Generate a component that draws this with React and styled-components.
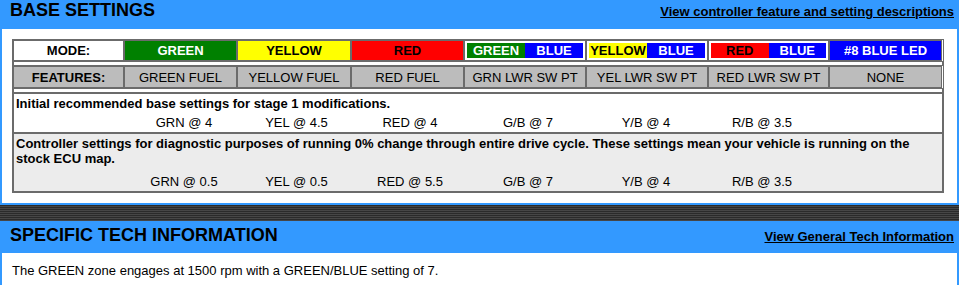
import React from 'react';
import styled, { createGlobalStyle } from 'styled-components';

const colors = {
  blue: '#3399ff',
  line: '#6b6b6b',
  feature: '#bcbcbc',
  noteAlt: '#ececec',
  green: '#008000',
  yellow: '#ffff00',
  red: '#ff0000',
  ledBlue: '#0000ff',
  white: '#ffffff',
  black: '#000000',
}

const columns = '111px 113px 114px 113px 122px 122px 121px 113px'
// the setting values sit in their own inner grid, a little off the header columns
const valueColumns = '113px 114px 111px 116px 120px 116px 116px'

const GlobalStyle = createGlobalStyle`
  body{
    margin:0;
    background-color:${colors.white};
    font-family:"Liberation Sans", Arial, sans-serif;
    color:${colors.black};
  }
`

const Page = styled.div`
  width:959px;
`

const Section = styled.div`
  background-color:${colors.blue};
  padding:0 2px 2px 2px;
`

const Header = styled.div`
  display:flex;
  justify-content:space-between;
  align-items:baseline;
  height:${props => props.trimmed ? 29 : 32}px;
  box-sizing:border-box;
  padding:${props => props.trimmed ? 0 : 4}px 3px 0 8px;

  h2{
    margin:0;
    font-size:18px;
    line-height:21px;
    font-weight:bold;
  }
`

const HeaderLink = styled.a`
  font-size:13px;
  line-height:15px;
  font-weight:bold;
  color:${colors.black};
  text-decoration:underline;
  cursor:pointer;
`

const Panel = styled.div`
  background-color:${colors.white};
  padding:10px 10px;
  font-size:13px;
  line-height:15px;
`

const Stripes = styled.div`
  height:16px;
  background:repeating-linear-gradient(#2a2a2a 0px, #2a2a2a 1px, #464646 1px, #464646 2px);
`

const Frame = styled.div`
  width:930px;
  border:1px solid ${colors.line};
`

const Row = styled.div`
  display:grid;
  grid-template-columns:${columns};
  height:${props => props.height}px;
`

const Cell = styled.div`
  display:flex;
  align-items:center;
  justify-content:center;
  box-sizing:border-box;
  border:1px solid ${colors.line};
  font-size:13px;
  font-weight:${props => props.bold ? 'bold' : 'normal'};
  background-color:${props => props.bg || colors.white};
  color:${props => props.fg || colors.black};
  white-space:nowrap;
`

const DualCell = styled(Cell)`
  padding:2px;
  align-items:stretch;
`

const Half = styled.div`
  flex:1;
  display:flex;
  align-items:center;
  justify-content:center;
  font-weight:bold;
  background-color:${props => props.bg};
  color:${props => props.fg};
`

const Spacer = styled.div`
  height:5px;
  box-sizing:border-box;
  border:1px solid ${colors.line};
`

const Note = styled.div`
  box-sizing:border-box;
  border:1px solid ${colors.line};
  background-color:${props => props.alt ? colors.noteAlt : colors.white};
  height:${props => props.height}px;
  padding:2px 2px 0 2px;

  p{
    margin:0;
    font-weight:bold;
  }
`

const Values = styled.div`
  display:grid;
  grid-template-columns:${valueColumns};
  margin:${props => props.gap}px 0 0 -2px;

  span{
    text-align:center;
  }
`

const modes = [
  { label: 'MODE:', bg: colors.white, fg: colors.black },
  { label: 'GREEN', bg: colors.green, fg: colors.white },
  { label: 'YELLOW', bg: colors.yellow, fg: colors.black },
  { label: 'RED', bg: colors.red, fg: colors.black },
  { dual: [{ label: 'GREEN', bg: colors.green, fg: colors.white }, { label: 'BLUE', bg: colors.ledBlue, fg: colors.white }] },
  { dual: [{ label: 'YELLOW', bg: colors.yellow, fg: colors.black }, { label: 'BLUE', bg: colors.ledBlue, fg: colors.white }] },
  { dual: [{ label: 'RED', bg: colors.red, fg: colors.black }, { label: 'BLUE', bg: colors.ledBlue, fg: colors.white }] },
  { label: '#8 BLUE LED', bg: colors.ledBlue, fg: colors.white },
]

const features = ['GREEN FUEL', 'YELLOW FUEL', 'RED FUEL', 'GRN LWR SW PT', 'YEL LWR SW PT', 'RED LWR SW PT', 'NONE']

const notes = [
  {
    text: 'Initial recommended base settings for stage 1 modifications.',
    values: ['GRN @ 4', 'YEL @ 4.5', 'RED @ 4', 'G/B @ 7', 'Y/B @ 4', 'R/B @ 3.5'],
    height: 40,
    gap: 4,
  },
  {
    text: 'Controller settings for diagnostic purposes of running 0% change through entire drive cycle. These settings mean your vehicle is running on the stock ECU map.',
    values: ['GRN @ 0.5', 'YEL @ 0.5', 'RED @ 5.5', 'G/B @ 7', 'Y/B @ 4', 'R/B @ 3.5'],
    height: 59,
    gap: 8,
    alt: true,
  },
]

const SettingsTable = () => (
  <Frame>
    <Row height={21}>
      {modes.map((m, i) => m.dual
        ? <DualCell key={i}>{m.dual.map(h => <Half key={h.label} bg={h.bg} fg={h.fg}>{h.label}</Half>)}</DualCell>
        : <Cell key={i} bold bg={m.bg} fg={m.fg}>{m.label}</Cell>
      )}
    </Row>
    <Spacer />
    <Row height={22}>
      <Cell bold bg={colors.feature}>FEATURES:</Cell>
      {features.map(f => <Cell key={f} bg={colors.feature}>{f}</Cell>)}
    </Row>
    <Spacer />
    {notes.map(n => (
      <Note key={n.text} alt={n.alt} height={n.height}>
        <p>{n.text}</p>
        <Values gap={n.gap}>
          <span />
          {n.values.map(v => <span key={v}>{v}</span>)}
        </Values>
      </Note>
    ))}
  </Frame>
)

const App = () => (
  <Page>
    <GlobalStyle />
    <Section>
      <Header trimmed>
        <h2>BASE SETTINGS</h2>
        <HeaderLink>View controller feature and setting descriptions</HeaderLink>
      </Header>
      <Panel>
        <SettingsTable />
      </Panel>
    </Section>
    <Stripes />
    <Section>
      <Header>
        <h2>SPECIFIC TECH INFORMATION</h2>
        <HeaderLink>View General Tech Information</HeaderLink>
      </Header>
      <Panel>
        The GREEN zone engages at 1500 rpm with a GREEN/BLUE setting of 7.
      </Panel>
    </Section>
  </Page>
)

export default App;
